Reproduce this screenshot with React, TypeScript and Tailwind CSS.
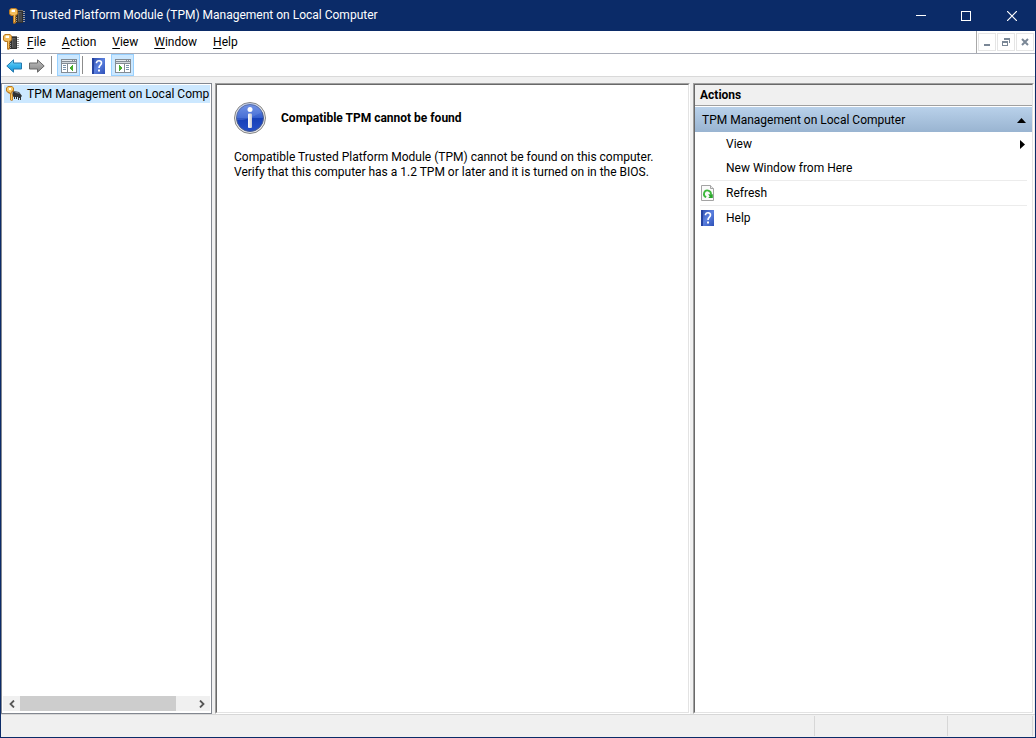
import { useState, type ReactNode } from 'react'

const menus = ['File', 'Action', 'View', 'Window', 'Help']

function TpmIcon() {
  return (
    <svg viewBox="0 0 16 16" className="size-4 shrink-0" aria-hidden="true">
      <path d="M8 2h6v13H7V8z" fill="#2f2f2f" />
      <path d="M8 2h6v1H8z" fill="#6a6a6a" />
      <path d="M9 4h4v10H9z" fill="#484848" />
      <path d="M9 4h3v1H9zM9 5h1v8H9z" fill="#5e5e5e" />
      <path d="M14 3h2v1h-2zM14 5h2v1h-2zM14 7h2v1h-2zM14 9h2v1h-2zM14 11h2v1h-2zM14 13h2v1h-2zM7 9h1v1H7zM7 11h1v1H7zM7 13h1v1H7z" fill="#9c9c9c" />
      <path d="M2 0h5l2 2v4L7 8v7l-2 1-1-1V8H2L0 6V2z" fill="#bb7a22" />
      <path d="M2 1h5l1 1v4L6 7v7H5V7H3L1 6V2z" fill="#f3bd5c" />
      <path d="M3 2h3v2H3z" fill="#fff" />
      <path d="M2 2h1v2H2zM3 1h3v1H3z" fill="#fbdf9d" />
      <path d="M6 9h1v1H6zM6 11h1v1H6zM6 13h1v1H6z" fill="#8f5a14" />
    </svg>
  )
}

function TpmNodeIcon() {
  return (
    <svg viewBox="0 0 16 16" className="size-4 shrink-0" aria-hidden="true">
      <path d="M7 5l6 1 3 4-1 1v3h-1v-2h-1v2h-1v-3h-1v2h-1v-2H9v2H8v-2L6 10z" fill="#2f3235" />
      <path d="M7 5l5 1 2 2-4-1z" fill="#777b80" />
      <path d="M2 0h4l2 2v3L6 7l1 2v5l-1 1-2-1V8L2 7 0 5V2z" fill="#bb7a22" />
      <path d="M2 1h4l1 1v2L5 6l1 3v5H5V7L1 5V2z" fill="#f8cb66" />
      <path d="M3 2h2v2H3z" fill="#fff" />
      <path d="M6 10h1v1H6zM6 12h1v1H6z" fill="#d18a28" />
    </svg>
  )
}

function ArrowIcon({ back = false }: { back?: boolean }) {
  return back ? (
    <svg viewBox="0 0 16 14" className="h-3.5 w-4" aria-hidden="true">
      <defs>
        <linearGradient id="back" x2="0" y2="1">
          <stop stopColor="#82dcfa" />
          <stop offset=".5" stopColor="#36b4ec" />
          <stop offset="1" stopColor="#168fd4" />
        </linearGradient>
      </defs>
      <path d="M.8 7L7.5.8v3.2h8v6h-8v3.2z" fill="url(#back)" stroke="#2479ae" />
    </svg>
  ) : (
    <svg viewBox="0 0 16 14" className="h-3.5 w-4" aria-hidden="true">
      <defs>
        <linearGradient id="forward" x2="0" y2="1">
          <stop stopColor="#c0c0c0" />
          <stop offset="1" stopColor="#858585" />
        </linearGradient>
      </defs>
      <path d="M15.2 7L8.5.8v3.2h-8v6h8v3.2z" fill="url(#forward)" stroke="#686868" />
    </svg>
  )
}

function PaneIcon({ right = false }: { right?: boolean }) {
  return (
    <svg viewBox="0 0 16 14" className="h-3.5 w-4" shapeRendering="crispEdges" aria-hidden="true">
      <path d="M0 0h16v14H0z" fill="#848c94" />
      <path d="M1 1h10v1H1zM12 1h1v1h-1zM14 1h1v1h-1z" fill="#e6eaee" />
      <path d="M1 3h14v1H1z" fill="#d1d7dd" />
      {right ? (
        <>
          <path d="M1 5h8v8H1zM10 5h5v8h-5z" fill="#fff" />
          <path d="M11 6h3v1h-3zM11 8h3v1h-3zM11 10h3v1h-3z" fill="#7893ac" />
          <path d="M4 6v6h1v-1h1v-1h1V8H6V7H5V6z" fill="#48ad2d" />
        </>
      ) : (
        <>
          <path d="M1 5h5v8H1zM7 5h8v8H7z" fill="#fff" />
          <path d="M2 6h3v1H2zM2 8h3v1H2zM2 10h3v1H2z" fill="#7893ac" />
          <path d="M12 6v6h-1v-1h-1v-1H9V8h1V7h1V6z" fill="#48ad2d" />
        </>
      )}
    </svg>
  )
}

function HelpIcon() {
  return (
    <svg viewBox="0 0 13 16" className="h-4 w-[13px]" aria-hidden="true">
      <defs>
        <linearGradient id="book" x2="1" y2="1">
          <stop stopColor="#2948a8" />
          <stop offset=".5" stopColor="#5b80df" />
          <stop offset="1" stopColor="#2d50b7" />
        </linearGradient>
      </defs>
      <path d="M0 0h13v16H0z" fill="url(#book)" />
      <path d="M0 0h2v16H0z" fill="#2543a0" />
      <path d="M4.5 5.2V4.5Q5 2.8 7 2.8q2.5 0 2.5 2.3 0 1.3-1.3 2.3Q7 8.4 7 10" fill="none" stroke="#fff" strokeWidth="1.6" />
      <path d="M6 11.5h2v2H6z" fill="#fff" />
    </svg>
  )
}

function RefreshIcon() {
  return (
    <svg viewBox="0 0 13 16" className="h-4 w-[13px]" aria-hidden="true">
      <path d="M.5.5h9l3 3v12H.5z" fill="#fafafa" stroke="#a3a3a3" />
      <path d="M9.5.5v3h3" fill="#e9e9e9" stroke="#a3a3a3" />
      <path d="M5.2 12.2A3.5 3.5 0 1 1 9.9 9.5" fill="none" stroke="#3cb83b" strokeWidth="1.8" />
      <path d="M7.2 9.3h4.6V13H7.200l1.500-1.500z" fill="#2aa52c" />
    </svg>
  )
}

function InfoIcon() {
  return (
    <svg viewBox="0 0 32 32" className="size-8 shrink-0" aria-hidden="true">
      <defs>
        <linearGradient id="info" x2="0" y2="1">
          <stop stopColor="#6f91e5" />
          <stop offset=".48" stopColor="#355fce" />
          <stop offset=".52" stopColor="#163fb7" />
          <stop offset="1" stopColor="#2450c8" />
        </linearGradient>
        <linearGradient id="stem">
          <stop stopColor="#fff" />
          <stop offset="1" stopColor="#c5c9d5" />
        </linearGradient>
      </defs>
      <circle cx="16" cy="16" r="15.5" fill="#e8e8e8" stroke="#858585" />
      <circle cx="16" cy="16" r="13.5" fill="url(#info)" stroke="#4a5d91" />
      <path d="M3 18Q12 19 28 10A13 13 0 0 0 3 18z" fill="#7897e8" opacity=".3" />
      <circle cx="16" cy="7.5" r="2.5" fill="#fff" />
      <rect x="14" y="11.5" width="4" height="14.5" rx="1" fill="url(#stem)" />
    </svg>
  )
}

function ToolButton({ label, pressed, onClick, children }: { label: string; pressed?: boolean; onClick?: () => void; children: ReactNode }) {
  return (
    <button
      aria-label={label}
      onClick={onClick}
      className={`flex h-[22px] w-[23px] items-center justify-center border pt-px ${pressed ? 'border-[#99d1ff] bg-[#cce8ff]' : 'border-transparent'}`}
    >
      {children}
    </button>
  )
}

function ActionItem({ label, icon, arrow }: { label: string; icon?: ReactNode; arrow?: boolean }) {
  return (
    <button className="flex h-6 w-full items-center pr-[2px] pl-px text-left hover:bg-[#e5f3ff]">
      <span className="flex w-[25px] shrink-0">{icon}</span>
      <span className="grow">{label}</span>
      {arrow && (
        <svg viewBox="0 0 5 9" className="h-[9px] w-[5px]" aria-hidden="true">
          <path d="M0 0l5 4.5L0 9z" />
        </svg>
      )}
    </button>
  )
}

const sunken = 'border border-t-[#a0a0a0] border-l-[#a0a0a0] border-r-white border-b-white'
const sunkenInner = 'border border-t-[#696969] border-l-[#696969] border-r-[#e3e3e3] border-b-[#e3e3e3]'

export default function App() {
  const [showTree, setShowTree] = useState(true)
  const [showActions, setShowActions] = useState(true)
  const [open, setOpen] = useState(true)

  return (
    <div className="flex h-screen flex-col border border-t-0 border-[#0b2b68] bg-[#f0f0f0] font-['Segoe_UI',Roboto,sans-serif] text-[12px] leading-[15px] text-black">
      <header className="flex h-[31px] shrink-0 items-center bg-[#0b2b68] pl-2 text-white">
        <TpmIcon />
        <h1 className="ml-[5px] grow">Trusted Platform Module (TPM) Management on Local Computer</h1>
        <button aria-label="Minimize" className="flex h-full w-[45px] items-center justify-center">
          <span className="h-px w-2.5 bg-white" />
        </button>
        <button aria-label="Maximize" className="flex h-full w-[46px] items-center justify-center">
          <span className="size-2.5 border border-white" />
        </button>
        <button aria-label="Close" className="flex h-full w-[46px] items-center justify-center">
          <svg viewBox="0 0 10 10" className="size-2.5" aria-hidden="true">
            <path d="M0 0l10 10M10 0L0 10" stroke="#fff" strokeWidth="1.2" />
          </svg>
        </button>
      </header>

      <div className="flex h-[23px] shrink-0 border-b border-[#a9adb8] bg-white">
        <div className="flex grow items-center pl-[2px]">
          <TpmIcon />
          <nav className="flex">
            {menus.map((m) => (
              <button key={m} className="px-2">
                <span className="underline underline-offset-2">{m[0]}</span>
                {m.slice(1)}
              </button>
            ))}
          </nav>
        </div>
        <div className="flex items-center gap-px border-l border-[#a9a9a9] px-px">
          <button aria-label="Minimize window" className="flex h-[18px] w-[18px] items-center justify-center border border-[#e5e5e5]">
            <svg viewBox="0 0 10 10" className="size-2.5" aria-hidden="true">
              <path d="M2 7h6v2H2z" fill="#7a8796" />
            </svg>
          </button>
          <button aria-label="Restore window" className="flex h-[18px] w-[18px] items-center justify-center border border-[#e5e5e5]">
            <svg viewBox="0 0 10 10" className="size-2.5" shapeRendering="crispEdges" aria-hidden="true">
              <path d="M3 1h6v5H8V3H3zM1 4h6v5H1zM2 6v2h4V6z" fill="#7a8796" fillRule="evenodd" />
            </svg>
          </button>
          <button aria-label="Close window" className="flex h-[18px] w-[18px] items-center justify-center border border-[#e5e5e5]">
            <svg viewBox="0 0 10 10" className="size-2.5" aria-hidden="true">
              <path d="M2 2l6 6M8 2L2 8" stroke="#7a8796" strokeWidth="2" />
            </svg>
          </button>
        </div>
      </div>

      <div className="flex h-[23px] shrink-0 items-center border-b border-[#d9d9d9] bg-white pl-px">
        <ToolButton label="Back"><ArrowIcon back /></ToolButton>
        <ToolButton label="Forward"><ArrowIcon /></ToolButton>
        <span className="mr-[5px] ml-[3px] h-[18px] w-px bg-[#8c8c8c]" />
        <ToolButton label="Show/Hide Console Tree" pressed={showTree} onClick={() => setShowTree(!showTree)}>
          <PaneIcon />
        </ToolButton>
        <span className="mr-1 ml-[2px] h-[18px] w-px bg-[#8c8c8c]" />
        <ToolButton label="Help"><HelpIcon /></ToolButton>
        <span className="w-px" />
        <ToolButton label="Show/Hide Action Pane" pressed={showActions} onClick={() => setShowActions(!showActions)}>
          <PaneIcon right />
        </ToolButton>
      </div>

      <div className="flex min-h-0 grow gap-[3px] pt-[6px] pr-px">
        {showTree && (
          <aside className="flex w-[211px] shrink-0 flex-col border border-[#828790] bg-white px-px pt-px pb-[2px]">
            <div className="grow pl-px">
              <button className="flex h-[18px] w-full items-center gap-[5px] bg-[#cce8ff] pl-[2px] text-left whitespace-nowrap">
                <TpmNodeIcon />
                TPM Management on Local Comp
              </button>
            </div>
            <div className="flex h-[15px] bg-[#f0f0f0]">
              <button aria-label="Scroll left" className="flex w-[17px] items-center justify-center">
                <svg viewBox="0 0 6 8" className="h-2 w-1.5" aria-hidden="true">
                  <path d="M5 .5L1.5 4 5 7.5" fill="none" stroke="#555" strokeWidth="1.8" />
                </svg>
              </button>
              <div className="grow">
                <div className="h-full w-[90%] bg-[#cdcdcd]" />
              </div>
              <button aria-label="Scroll right" className="flex w-[17px] items-center justify-center">
                <svg viewBox="0 0 6 8" className="h-2 w-1.5" aria-hidden="true">
                  <path d="M1 .5L4.5 4 1 7.5" fill="none" stroke="#555" strokeWidth="1.8" />
                </svg>
              </button>
            </div>
          </aside>
        )}

        <main className={`flex min-w-0 grow ${sunken}`}>
          <div className={`grow bg-white px-[17px] pt-[17px] ${sunkenInner}`}>
            <div className="flex items-center gap-[15px]">
              <InfoIcon />
              <h2 className="font-bold">Compatible TPM cannot be found</h2>
            </div>
            <p className="mt-4">
              Compatible Trusted Platform Module (TPM) cannot be found on this computer.
              <br />
              Verify that this computer has a 1.2 TPM or later and it is turned on in the BIOS.
            </p>
          </div>
        </main>

        {showActions && (
          <aside className={`flex w-[341px] shrink-0 ${sunken}`}>
            <div className={`grow bg-white ${sunkenInner}`}>
              <h2 className="flex h-[21px] items-center border-b border-[#a0a0a0] bg-[#f0f0f0] pt-px pl-[5px] font-bold">Actions</h2>
              <button
                onClick={() => setOpen(!open)}
                className="mt-px flex h-[25px] w-full items-center justify-between bg-linear-to-b from-[#b9d1ea] to-[#99b4d1] pt-px pr-[6px] pl-[7px]"
              >
                TPM Management on Local Computer
                <svg viewBox="0 0 9 5" className="h-[5px] w-[9px]" aria-hidden="true">
                  <path d={open ? 'M0 5L4.5 0 9 5z' : 'M0 0l4.5 5L9 0z'} />
                </svg>
              </button>
              {open && (
                <div className="mx-[5px]">
                  <ActionItem label="View" arrow />
                  <ActionItem label="New Window from Here" />
                  <div className="border-y border-[#ececec]">
                    <ActionItem label="Refresh" icon={<RefreshIcon />} />
                  </div>
                  <ActionItem label="Help" icon={<HelpIcon />} />
                </div>
              )}
            </div>
          </aside>
        )}
      </div>

      <footer className="flex h-[23px] shrink-0 justify-end border-t border-[#d7d7d7] pt-px pr-[2px] pb-px">
        <div className="w-[133px] border-l border-[#d7d7d7]" />
        <div className="w-[86px] border-x border-[#d7d7d7]" />
      </footer>
    </div>
  )
}
